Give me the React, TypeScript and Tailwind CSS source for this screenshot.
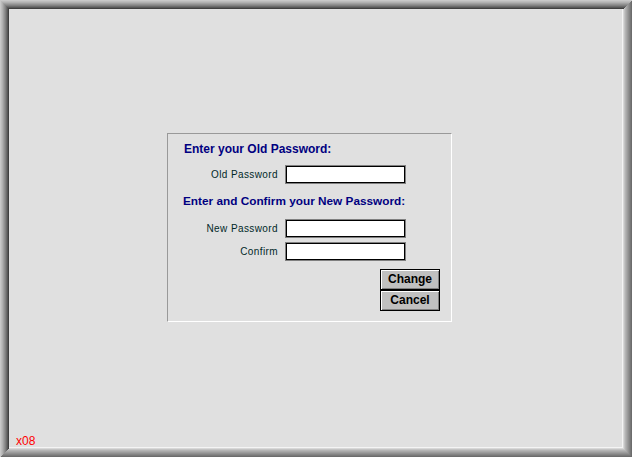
import React from "react";

const frame =
  "shadow-[inset_1px_1px_0_#c8c8c8,inset_-1px_-1px_0_#6c6c6c,inset_2px_2px_0_#bcbcbc,inset_-2px_-2px_0_#787878,inset_3px_3px_0_#b0b0b0,inset_-3px_-3px_0_#848484,inset_4px_4px_0_#a0a0a0,inset_-4px_-4px_0_#909090,inset_5px_5px_0_#909090,inset_-5px_-5px_0_#9c9c9c,inset_6px_6px_0_#808080,inset_-6px_-6px_0_#a8a8a8,inset_7px_7px_0_#6c6c6c,inset_-7px_-7px_0_#b4b4b4,inset_8px_8px_0_#585858,inset_-8px_-8px_0_#c4c4c4,inset_9px_9px_0_#404040,inset_-9px_-9px_0_#d8d8d8,inset_-10px_-10px_0_#f4f4f4]";

function Field({ label, className = "" }: { label: string; className?: string }) {
  return (
    <div className={`flex items-center ${className}`}>
      <label className="w-[117px] pr-[7px] text-right text-[10px] tracking-[0.4px] text-[#002828] font-['Liberation_Sans',Arial,sans-serif]">
        {label}
      </label>
      <input
        type="password"
        className="w-[121px] h-[19px] bg-white border border-[#808080] shadow-[inset_1px_1px_0_#000,inset_-1px_-1px_0_#000] outline-none"
      />
    </div>
  );
}

function Button({ children }: { children: React.ReactNode }) {
  return (
    <button className="w-[60px] h-[21px] bg-[#c0c0c0] border border-black shadow-[inset_1px_1px_0_#fff,inset_-1px_-1px_0_#808080] text-[12px] font-bold text-black leading-none font-['Liberation_Sans',Arial,sans-serif]">
      {children}
    </button>
  );
}

export default function App() {
  return (
    <div className={`w-[632px] h-[457px] bg-[#e0e0e0] relative flex items-center justify-center ${frame}`}>
      <div className="mr-[13px] mt-[-3px] w-[285px] h-[189px] border border-t-[#999] border-l-[#999] border-b-white border-r-white flex flex-col pt-[8px] pb-[9px]">
        <h2 className="pl-[16px] h-[14px] leading-[14px] text-[12px] font-bold text-[#000080] font-['Liberation_Sans',Arial,sans-serif]">
          Enter your Old Password:
        </h2>
        <Field label="Old Password" className="mt-[9px]" />
        <h2 className="mt-[10px] pl-[15px] h-[14px] leading-[14px] text-[11.8px] font-bold text-[#000080] font-['Liberation_Sans',Arial,sans-serif]">
          Enter and Confirm your New Password:
        </h2>
        <Field label="New Password" className="mt-[11px]" />
        <Field label="Confirm" className="mt-[4px]" />
        <div className="mt-[8px] ml-[212px] flex flex-col">
          <Button>Change</Button>
          <Button>Cancel</Button>
        </div>
      </div>
      <span className="absolute left-[16px] top-[432px] text-[12px] text-[#ff0000] font-['Liberation_Sans',Arial,sans-serif]">
        x08
      </span>
    </div>
  );
}
